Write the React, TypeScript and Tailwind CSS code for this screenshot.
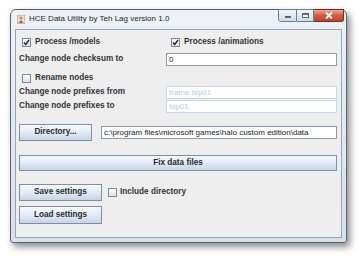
import React from "react";

const Check = ({ checked }: { checked?: boolean }) => (
  <div className="w-[9px] h-[9px] border border-[#7a8a99] bg-gradient-to-b from-[#ffffff] to-[#d6e2ee] flex items-center justify-center shrink-0">
    {checked && (
      <svg width="7" height="7" viewBox="0 0 7 7">
        <path d="M1 3.5 L2.8 5.5 L6 1" stroke="#222" strokeWidth="1.4" fill="none" />
      </svg>
    )}
  </div>
);

const Btn = ({ children, className = "" }: { children: React.ReactNode; className?: string }) => (
  <div
    className={`border border-[#7f8fa0] bg-gradient-to-b from-[#f6f9fc] via-[#e3ebf4] to-[#c6d5e5] flex items-center justify-center font-bold text-[#2b2b2b] ${className}`}
  >
    {children}
  </div>
);

const Field = ({ value, disabled, className = "" }: { value: string; disabled?: boolean; className?: string }) => (
  <div
    className={`bg-white border flex items-center px-[2px] whitespace-nowrap overflow-hidden text-[8px] ${
      disabled ? "border-[#c8d8ea] text-[#b8cce0]" : "border-[#8d9aa7] text-[#222]"
    } ${className}`}
  >
    {value}
  </div>
);

export default function App() {
  return (
    <div
      className="w-[360px] h-[256px] bg-white overflow-hidden pt-[9px] pl-[10px]"
      style={{ fontFamily: '"Liberation Sans", Arial, sans-serif' }}
    >
      {/* window */}
      <div className="w-[337px] h-[234px] rounded-t-[6px] rounded-b-[3px] border border-[#56626f] bg-gradient-to-b from-[#eef2f6] via-[#e1e8ef] to-[#d6e0ea] shadow-[3px_4px_7px_rgba(0,0,0,0.45)] flex flex-col px-[4px] pb-[4px]">
        {/* title bar */}
        <div className="h-[19px] flex items-start shrink-0">
          <div className="flex items-center h-[18px] pl-[2px] gap-[4px]">
            <svg width="8" height="9" viewBox="0 0 8 9">
              <rect x="0" y="0" width="8" height="9" fill="#e8e0d0" stroke="#8a7a66" strokeWidth="0.6" />
              <circle cx="4" cy="3" r="1.6" fill="#d08a3a" />
              <path d="M1.5 8 L4 5 L6.5 8 Z" fill="#a06a30" />
            </svg>
            <span className="text-[8px] text-[#1e1e1e] leading-none">HCE Data Utility by Teh Lag version 1.0</span>
          </div>
          <div className="ml-auto flex mr-[-2px] mt-[-1px]">
            <div className="w-[19px] h-[13px] border border-[#6d7d90] rounded-bl-[3px] bg-gradient-to-b from-[#f2f6fa] to-[#cfdbe7] flex items-end justify-center pb-[3px]">
              <div className="w-[6px] h-[2px] bg-white border border-[#5a6776]" />
            </div>
            <div className="w-[17px] h-[13px] border-y border-r border-[#6d7d90] bg-gradient-to-b from-[#f2f6fa] to-[#cfdbe7] flex items-center justify-center">
              <div className="w-[7px] h-[5px] border border-[#5a6776] border-t-2 bg-white/60" />
            </div>
            <div className="w-[30px] h-[13px] border-y border-r border-[#7a2b20] rounded-br-[3px] bg-gradient-to-b from-[#e8a898] via-[#d25a44] to-[#c0432c] flex items-center justify-center">
              <svg width="8" height="7" viewBox="0 0 8 7">
                <path d="M1 0.5 L7 6.5 M7 0.5 L1 6.5" stroke="#fff" strokeWidth="1.8" />
              </svg>
            </div>
          </div>
        </div>

        {/* client area */}
        <div className="flex-1 border border-[#8fa8c2] bg-[#eeeeee] flex flex-col pl-[3px] pr-[4px] text-[8.2px] leading-none">
          <div className="h-[12px] mt-[6px] flex items-center">
            <div className="w-[150px] flex items-center gap-[4px] pl-[3px] font-bold text-[#333]">
              <Check checked />
              <span>Process /models</span>
            </div>
            <div className="flex items-center gap-[4px] pl-[2px] font-bold text-[#333]">
              <Check checked />
              <span>Process /animations</span>
            </div>
          </div>

          <div className="h-[13px] mt-[5px] flex items-center">
            <span className="w-[147px] font-bold text-[#333]">Change node checksum to</span>
            <Field value="0" className="flex-1 h-[13px]" />
          </div>

          <div className="h-[12px] mt-[6px] flex items-center gap-[4px] pl-[3px] font-bold text-[#333]">
            <Check />
            <span>Rename nodes</span>
          </div>

          <div className="h-[13px] mt-[2px] flex items-center">
            <span className="w-[147px] font-bold text-[#333]">Change node prefixes from</span>
            <Field value="frame bip01" disabled className="flex-1 h-[13px]" />
          </div>
          <div className="h-[13px] mt-[1px] flex items-center">
            <span className="w-[147px] font-bold text-[#333]">Change node prefixes to</span>
            <Field value="bip01" disabled className="flex-1 h-[13px]" />
          </div>

          <div className="h-[17px] mt-[11px] flex items-center gap-[9px]">
            <Btn className="w-[73px] h-[17px]">Directory...</Btn>
            <Field value="c:\program files\microsoft games\halo custom edition\data" className="flex-1 h-[13px]" />
          </div>

          <Btn className="h-[16px] mt-[14px]">Fix data files</Btn>

          <div className="h-[17px] mt-[13px] flex items-center gap-[6px]">
            <Btn className="w-[83px] h-[17px]">Save settings</Btn>
            <div className="flex items-center gap-[3px] font-bold text-[#333]">
              <Check />
              <span>Include directory</span>
            </div>
          </div>

          <Btn className="w-[83px] h-[18px] mt-[5px]">Load settings</Btn>
        </div>
      </div>
    </div>
  );
}
